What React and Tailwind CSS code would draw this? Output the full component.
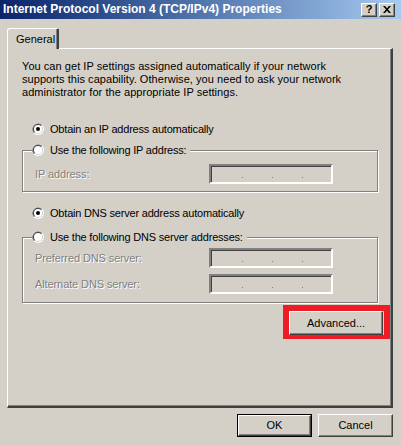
import React from 'react';

const face = 'bg-[#d4d0c8]';

function Radio({ checked }) {
  return (
    <svg width="12" height="12" viewBox="0 0 12 12" className="shrink-0">
      <circle cx="6" cy="6" r="6" fill="#ffffff" />
      <path d="M10.24 1.76A6 6 0 0 0 1.76 10.24L6 6Z" fill="#808080" />
      <circle cx="6" cy="6" r="5" fill="#d4d0c8" />
      <path d="M9.54 2.46A5 5 0 0 0 2.46 9.54L6 6Z" fill="#404040" />
      <circle cx="6" cy="6" r="4" fill="#ffffff" />
      {checked && <circle cx="6" cy="6" r="2" fill="#000000" />}
    </svg>
  );
}

function RadioRow({ checked, label }) {
  return (
    <div className="flex h-[16px] items-center gap-[6px] pl-[10px]">
      <Radio checked={checked} />
      <span className="whitespace-nowrap leading-[16px] tracking-[-0.2px]">{label}</span>
    </div>
  );
}

function IpBox() {
  return (
    <div className="box-border flex h-[20px] w-[124px] items-start gap-[29px] border-2 border-t-[#808080] border-l-[#808080] border-b-white border-r-white bg-[#d4d0c8] pl-[31px] pt-[11px] shadow-[inset_1px_1px_0_#404040,inset_-1px_-1px_0_#d4d0c8]">
      <span className="block h-[1px] w-[1px] bg-[#808080]" />
      <span className="block h-[1px] w-[1px] bg-[#808080]" />
      <span className="block h-[1px] w-[1px] bg-[#808080]" />
    </div>
  );
}

function FieldRow({ label }) {
  return (
    <div className="flex items-center pl-[3px]">
      <span className="w-[174px] whitespace-nowrap tracking-[-0.1px] text-[#808080] [text-shadow:1px_1px_0_#ffffff]">{label}</span>
      <IpBox />
    </div>
  );
}

function Group({ label, children }) {
  return (
    <fieldset className="w-[356px] border border-[#808080] px-[9px] shadow-[inset_1px_1px_0_#ffffff,1px_1px_0_#ffffff]">
      <legend className={`${face} pr-[4px]`}>
        <div className="flex h-[16px] items-center gap-[6px]">
          <Radio checked={false} />
          <span className="whitespace-nowrap leading-[16px] tracking-[-0.2px]">{label}</span>
        </div>
      </legend>
      {children}
    </fieldset>
  );
}

function Button({ children, isDefault, className = '' }) {
  const inner = (
    <div className="flex h-full w-full items-center justify-center border border-t-white border-l-white border-b-[#404040] border-r-[#404040] shadow-[inset_-1px_-1px_0_#808080]">
      {children}
    </div>
  );
  return (
    <div className={`box-border ${isDefault ? 'border border-black' : ''} ${className}`}>{inner}</div>
  );
}

function TitleButton({ children }) {
  return (
    <div className="box-border flex h-[14px] w-[16px] items-center justify-center border border-t-white border-l-white border-b-[#404040] border-r-[#404040] bg-[#d4d0c8] shadow-[inset_-1px_-1px_0_#808080]">
      {children}
    </div>
  );
}

export default function App() {
  return (
    <div className="flex h-[445px] w-[401px] flex-col overflow-hidden bg-[#d4d0c8] text-[11px] leading-[13px] text-black [font-family:'Liberation_Sans',Arial,sans-serif]">
      <div className="flex h-[19px] shrink-0 items-center justify-between bg-gradient-to-r from-[#0a246a] to-[#a6caf0] pl-[3px] pr-[6px]">
        <span className="whitespace-nowrap text-[12px] font-bold text-white">
          Internet Protocol Version 4 (TCP/IPv4) Properties
        </span>
        <div className="flex gap-[2px]">
          <TitleButton>
            <span className="text-[11px] font-bold leading-none">?</span>
          </TitleButton>
          <TitleButton>
            <svg width="8" height="7" viewBox="0 0 8 7">
              <path d="M0 0h2l2 2.2L6 0h2L5 3.5 8 7H6L4 4.8 2 7H0l3-3.5Z" fill="#000" />
            </svg>
          </TitleButton>
        </div>
      </div>

      <div className="flex flex-col pl-[7px] pt-[9px]">
        <div className="relative z-10 -mb-[1px] flex h-[21px] w-[52px] items-center rounded-tl-[3px] rounded-tr-[2px] border-l border-t border-r-2 border-l-white border-t-white border-r-[#404040] bg-[#d4d0c8] pl-[8px] shadow-[inset_-1px_0_0_#808080]">
          General
        </div>
        <div className="box-border flex h-[360px] w-[386px] flex-col border-l border-t border-r-2 border-b-2 border-l-white border-t-white border-r-[#404040] border-b-[#404040] pl-[14px] shadow-[inset_-1px_-1px_0_#808080]">
          <p className="mt-[11px] whitespace-nowrap tracking-[0.05px]">
            You can get IP settings assigned automatically if your network
            <br />
            supports this capability. Otherwise, you need to ask your network
            <br />
            administrator for the appropriate IP settings.
          </p>

          <div className="mt-[22px]">
            <RadioRow checked label="Obtain an IP address automatically" />
          </div>

          <div className="mt-[5px]">
            <Group label="Use the following IP address:">
              <div className="pb-[7px] pt-[6px]">
                <FieldRow label="IP address:" />
              </div>
            </Group>
          </div>

          <div className="mt-[13px]">
            <RadioRow checked label="Obtain DNS server address automatically" />
          </div>

          <div className="mt-[8px]">
            <Group label="Use the following DNS server addresses:">
              <div className="flex flex-col gap-[6px] pb-[8px] pt-[3px]">
                <FieldRow label="Preferred DNS server:" />
                <FieldRow label="Alternate DNS server:" />
              </div>
            </Group>
          </div>

          <div className="mt-[2px] flex justify-end pr-[1px]">
            <div className="border-[6px] border-b-[4px] border-[#ee1c25] pr-[1px]">
              <Button className="h-[24px] w-[94px]">Advanced...</Button>
            </div>
          </div>
        </div>
      </div>

      <div className="mt-[6px] flex justify-end gap-[6px] pr-[8px]">
        <Button isDefault className="h-[23px] w-[75px]">OK</Button>
        <Button className="h-[23px] w-[75px]">Cancel</Button>
      </div>
    </div>
  );
}
